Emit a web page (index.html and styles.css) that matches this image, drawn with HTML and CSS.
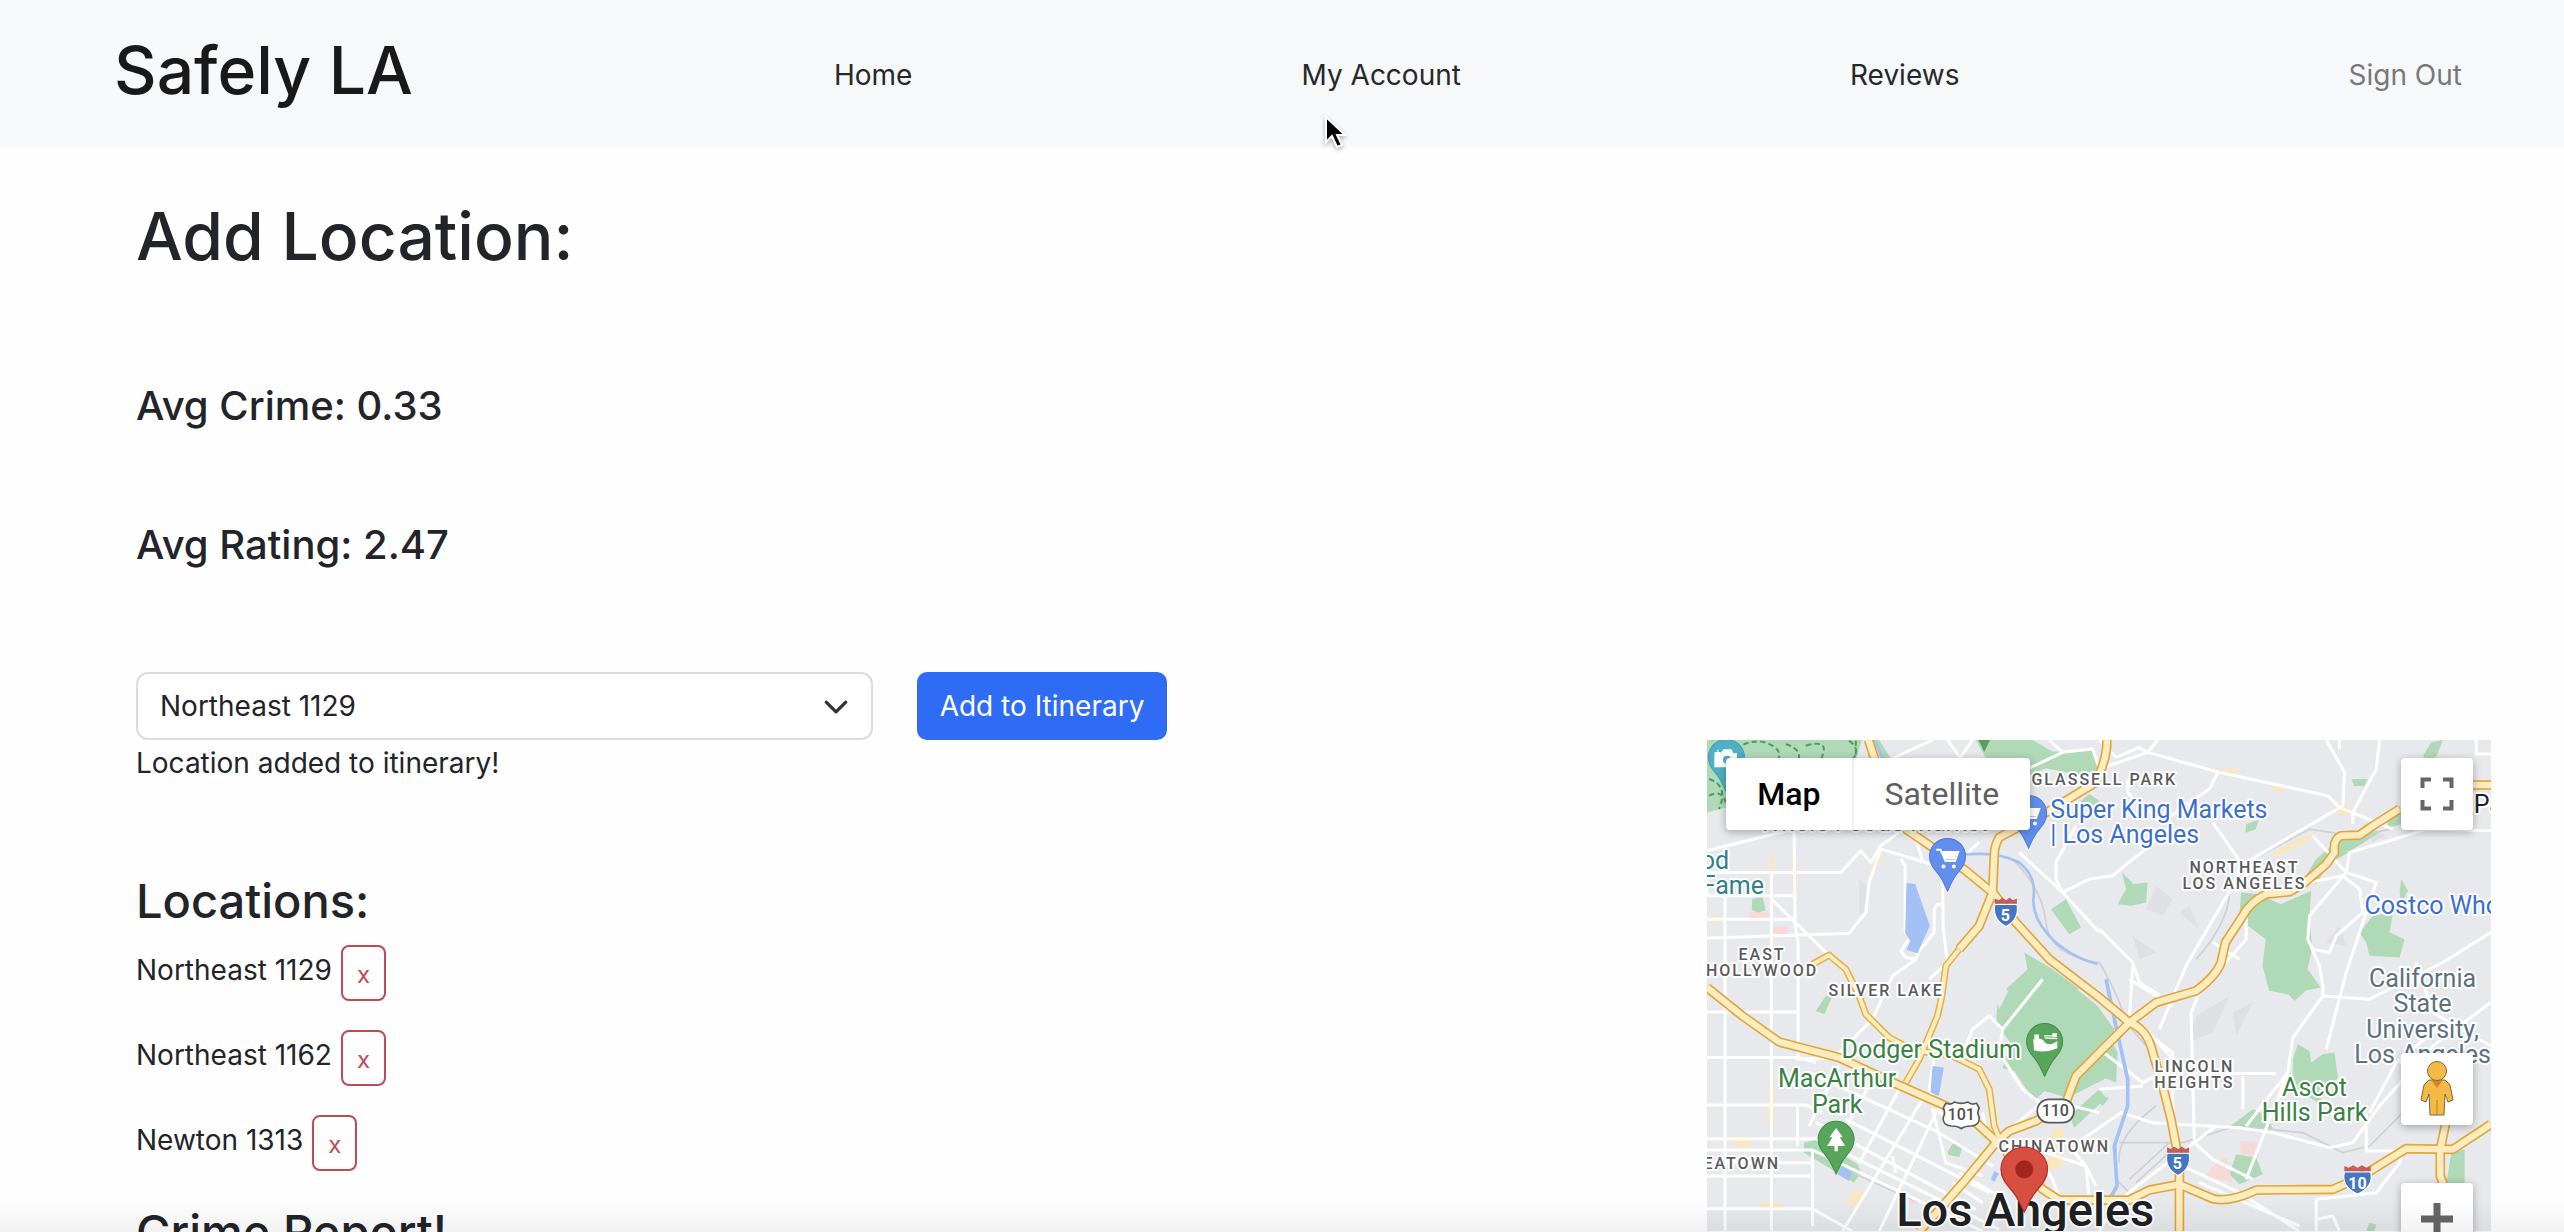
FILE: index.html
```html
<!DOCTYPE html>
<html lang="en">
<head>
<meta charset="utf-8">
<meta name="viewport" content="width=device-width, initial-scale=1">
<title>Safely LA</title>
<link rel="stylesheet" href="styles.css">
</head>
<body>
<header class="navbar">
  <a class="brand" href="#">Safely LA</a>
  <nav class="nav">
    <a href="#">Home</a>
    <a href="#">My Account</a>
    <a href="#">Reviews</a>
    <a class="muted" href="#">Sign Out</a>
  </nav>
</header>

<main class="page">
  <section class="planner">
    <h1>Add Location:</h1>
    <h3>Avg Crime: 0.33</h3>
    <h3>Avg Rating: 2.47</h3>
    <form class="add-form">
      <div class="select-wrap">
        <select class="select" aria-label="Location">
          <option>Northeast 1129</option>
          <option>Northeast 1162</option>
          <option>Newton 1313</option>
        </select>
        <svg class="chevron" viewBox="0 0 16 16" aria-hidden="true"><path d="m2 5 6 6 6-6"/></svg>
      </div>
      <button class="btn-primary" type="button">Add to Itinerary</button>
    </form>
    <p class="status">Location added to itinerary!</p>
    <h2>Locations:</h2>
    <ul class="locations">
      <li><span>Northeast 1129</span><button class="btn-remove" type="button">x</button></li>
      <li><span>Northeast 1162</span><button class="btn-remove" type="button">x</button></li>
      <li><span>Newton 1313</span><button class="btn-remove" type="button">x</button></li>
    </ul>
    <h2 class="report">Crime Report!</h2>
  </section>

  <section class="map" aria-label="Map of Los Angeles">
    <svg class="map-canvas" viewBox="0 0 783 491">
      <defs>
        <path id="pin" d="M0-54a54 54 0 0 1 54 54c0 28-20 42-34 64-9 15-14 28-20 40-6-12-11-25-20-40-14-22-34-36-34-64a54 54 0 0 1 54-54z"/>
        <g id="cart"><path d="M-34-20h13l15 34h28l10-27h-48" fill="none" stroke="#fff" stroke-width="6"/><path d="M-17-14h48l-10 23h-28z" fill="#fff"/><circle cx="-12" cy="30" r="6" fill="#fff"/><circle cx="19" cy="30" r="6" fill="#fff"/></g>
        <g id="shield"><path d="M-33-22h66c6 32-6 52-33 66-27-14-39-34-33-66z" fill="#4676c0" stroke="#fff" stroke-width="3"/><path d="M-33-24v-16l11 5 11-7 11 7 11-7 11 7 11-5v16z" fill="#c25d5b"/></g>
        <g id="highways">
          <path d="M24 775 130 860 240 938 420 985 560 1050 740 1130 830 1180 895 1240"/>
          <path d="M508 33 530 100 620 300 700 355 800 425 885 495 950 580 1050 690 1200 805 1290 880Q1345 900 1360 970L1390 1070 1415 1170 1440 1300V1506"/>
          <path d="M1222 33Q1226 80 1190 160L1050 245 900 325Q885 350 885 380L880 490 840 590 780 660"/>
          <path d="M2100 240 2020 290 1980 318 1925 320Q1900 330 1905 370L1880 405 1810 465 1770 488 1700 495Q1650 520 1630 560L1578 640 1565 700Q1550 740 1490 785L1370 820 1290 880 1200 970 1130 1040 1100 1120 1010 1175 930 1205 890 1240 800 1350 730 1430 660 1506"/>
          <path d="M895 1240 960 1310 1030 1380 1080 1412H1290L1350 1382 1440 1365 1540 1408Q1590 1420 1670 1382L1900 1380 1980 1345 2120 1258 2260 1260 2373 1185"/>
          <path d="M2245 1150 2222 1260 2222 1340 2245 1400"/>
          <path d="M2300 168H2380"/>
        </g>
        <g id="avenues">
          <path d="M340 705 390 678 440 720 480 800 500 855 570 925 640 962 760 980 840 1020 870 1080 885 1190 905 1240"/>
          <path d="M780 660 740 710 728 800 715 860 660 990 620 1060"/>
        </g>
      </defs>
      <g transform="translate(-8 -11) scale(.333333)">
        <rect x="24" y="33" width="2360" height="1500" fill="#e8e9ed"/>
        <g fill="#dfe0e4">
          <path d="M1370 470l50 40-30 50-50-20zM1470 530l30 70-60-50zM1300 620l70 50-50 20zM1490 860l100-60-50 110-70 30zM1600 850l60-30-50 100zM1880 640l40-50 20 60zM480 450l25 20-10 90-15-10zM1990 280l70 40-40 20z"/>
        </g>
        <g fill="#b0d9b8">
          <path d="M24 33H488L460 130 90 232 24 250zM540 33l50 80-30 10-40-90zM830 33h170l60 35 120-5 20 60-60 15-100-20-70 30-60-60-50 0zM1140 220l30-25 30 20-20 25zM1055 540l45-30 45 85-35 20zM160 508l30-5 10 40-25 8-17-10zM975 670l85 50 80 60-45 0-80 60-95-60 65-60z"/>
          <path d="M900 840 935 770l60-25 100 5 100 80 50 70-30 150-110 55-70-20-30 30-60-90-35-8 25-75-45-60 5-60zM1110 1160l90-80 20 25-95 90zM350 845l30-45 18 5-22 50zM745 1268l15-25 32 5-12 35-30-5zM315 1240l40-10 120 75 10 25-20 30-60-35-90-55z"/>
          <path d="M1255 525l25-45-12-50 35 35 42-5-5 60-45 10zM1625 490l50 5 70 30 90-40-6 90 10 80-15 65 40 55-100 20-55-10-20-75 10-80-80-60zM1640 285l38-12-10 28-30 10zM1890 400l-40 65-40-10 40-65 100-85 90 5-110 70zM1955 150h50l-10 20-30 2zM2170 80l25-40 35-7-20 50-30 10zM2060 250l40-20 15 55-50 10zM2020 560l60-10-10 60 45 20-15 55-90-5-10-40-20-30zM2105 450l20 35-20 40-5-40zM1735 760l75-20 25 30-50 45zM1780 990l15-45 35 20 5 35 35-25 35-5 10 75-60 75-75-50zM1600 1185l60-45 45 20 15 40-60 0-70-10zM1610 1275l60 10 20 50-70 30-30-30zM2255 1270l40-10v105h-55zM2010 1480l20 5-5 21h-25zM1200 850l25 60 30 60-5 90-50-20zM1200 1100l30 5-20 25-10-10z"/>
        </g>
        <path fill="none" stroke="#4a9c60" stroke-width="6" stroke-dasharray="16 10" d="M110 60q60-40 110-10t-20 80M260 45q60 20 30 60M320 50q70-20 50 30t60 20M30 150q60 20 30 90M450 35q40 30 5 60M470 35v50M30 200q40-20 50 20"/>
        <g fill="#fae7c0">
          <path d="M275 390h18v110h-14zM210 380h12v150h-12zM540 350l10 30-30 60-15 10zM24 560h45v20H24zM210 1055h15v130h-20zM105 1220h50v30h-50zM185 1420h60v20h-60zM1720 370l120-60 5 15-120 60zM1900 230l40-10 20 30-40 10zM1560 120h50v15h-50zM1710 170h50l-10 18-35-5zM470 1380l35 15-25 40-45-20zM880 1380l35 30-40 70zM1060 1200h35l-10 120h-40z"/>
        </g>
        <path fill="#f6d9d8" d="M150 550h65v25h-65zM222 592h45v22h-45zM1620 1235l65 5-10 45-50-10zM1540 1310l40-25 20 75-80-20zM625 1395l35 15-25 20z"/>
        <g fill="none" stroke="#cfd0d5" stroke-width="5">
          <path d="M940 390Q1030 480 1040 580T1200 700Q1260 800 1280 880L1340 950M1490 690Q1580 590 1590 500M1680 380 1830 300 1960 320 2080 300M1260 1240h190l160-50 200 20 120 60 80-20 100-100M1290 1350l120-110M1310 1360l110-100M1250 1240v110l60 60M1370 1130q-120 90-110 170M460 1330l200 90"/>
        </g>
        <g fill="none" stroke="#fff" stroke-width="9" stroke-linejoin="round">
          <path d="M24 365 285 300 470 260M24 430H425L485 365 515 400 545 350 600 310 700 280M217 430V750M78 500V1506M24 500H285M24 570H285M285 300 288 590 297 640V850M24 627 450 612 500 550 510 460 545 360 730 415 732 600 745 700 690 750"/>
          <path d="M217 510 330 620 400 690M650 330 670 395M605 390 618 410V610L632 625 605 665 620 685 650 690 660 665 705 610V540L715 525H730M575 90 700 33M745 33 800 110M820 33 780 90M985 120 1090 70 1050 33M1090 70 1180 60 1200 120M960 370 1090 490 1200 610M1130 290 1070 400V450L1090 490 1170 450 1240 440 1300 390 1340 360M840 340 800 375"/>
          <path d="M1200 33 1250 85 1320 55 1345 70 1375 33M1200 120 1345 70 1560 130 1885 200 1920 235 2080 300M1285 150V190L1320 230 1400 270 1530 180 1555 130M1540 280 1620 395 1610 490M1880 33 1935 130 1930 230 1640 400 1460 710 1380 900M2040 33 2030 120 1960 250V285M2330 33V75H2373M1840 320 1940 430 2030 460 1940 730 1880 960M1830 460 1930 440 1980 480 1990 550 1910 620 1890 670 1840 660 1825 630 1830 560 1940 430 1950 370 2070 335 2180 300 2373 305M1640 560V630L1500 790 1475 850 1485 1240 1540 1290 1660 1350M1540 640 1620 690M1825 630 1860 710 1870 770V800L1780 925 1765 1030 1640 1190M1200 600 1300 700 1320 760 1400 810M1300 710 1290 870 1420 970V1200M1290 750 1420 830M1330 890 1430 1000"/>
          <path d="M1870 800 2010 810 2230 700 2373 610M2150 700 2200 850 2373 950M2373 820 2200 950 2040 1130 1960 1240 1890 1255 1720 1210 1620 1195 1360 1180 1265 1150 1150 1230M1480 1033H1730M1630 1040V1140M1765 1030 1640 1350M1550 1190 1300 1380 1220 1450M1200 960 1330 1060 1440 1000M1200 1080 1330 1070M2000 1150V1265H2110L2100 1300 2030 1390 1850 1410V1506M1450 1310 1620 1390 1800 1506M1500 1360 1800 1490M1850 1470 1900 1460 1920 1506M2010 1150 2090 1000 2210 900M1920 33V60"/>
          <path d="M24 848H297M24 985H300L350 1000M217 750V1000M297 850V990M24 1127H320L370 1150M295 1127V1250M217 1000V1506M24 1228H350L900 1500M24 1262H340L850 1506M24 1300H340M24 1340H340M24 1438H340L460 1506M340 1260V1490M290 990 420 985 500 1020 560 1060M420 970 520 870 580 740 650 690M720 800 720 880M720 1150 700 1140 740 1300 850 1340M705 980 690 1080 730 1160M780 1000 820 900 870 860 910 900 1030 750M910 900 900 970 970 1080 1060 1150"/>
          <path d="M420 1010 330 1190M520 1050 400 1270M600 1080 480 1300M670 1110 430 1506M710 1150 540 1506M440 1170 870 1390M350 1180 830 1440M330 1030 720 1210 880 1310M580 1280 590 1330M850 1150 860 1200 920 1230 1160 1310 1190 1370M930 1200 1040 1110 1200 1150M1100 1240 1160 1310 1170 1410M1000 1250 1060 1350 1080 1410M1240 1430 1200 1506M1100 1410 1060 1506M760 1360 850 1420M780 1330 900 1400"/>
        </g>
        <g fill="none" stroke="#a3c1f4" stroke-width="9">
          <path d="M528 33 550 90M670 325Q740 380 820 375T960 400Q1010 440 1003 500T1050 620T1195 705" stroke-width="8"/>
          <path d="M1220 750 1245 870 1285 1050V1130L1245 1250 1253 1370 1230 1410" stroke-width="11"/>
        </g>
        <path fill="#a3c1f4" d="M622 462l26 3 44 125-37 82-33-10 12-25-16-25zM700 1010l34 5-15 85-25-10zM430 1310l28 20-8 25-35-20zM875 1350l10-25 14 8-14 25z"/>
        <g fill="none" stroke-linejoin="round">
          <use href="#avenues" stroke="#e6b040" stroke-width="21"/>
          <use href="#highways" stroke="#e0a83c" stroke-width="29"/>
          <use href="#avenues" stroke="#fdecc0" stroke-width="12"/>
          <use href="#highways" stroke="#fdecc0" stroke-width="19"/>
        </g>
        <use href="#pin" x="82" y="85" fill="#4fb0c6" stroke="#3b9cb2" stroke-width="3"/>
        <path d="M48 75h18l8-12h22l6 12h10v38H48zM56 62v18M47 71h18" fill="#fff" stroke="#fff" stroke-width="4"/><circle cx="84" cy="92" r="12" fill="#4fb0c6"/>
        <use href="#pin" x="855" y="-35" fill="#57a05c"/>
        <use href="#pin" x="988" y="253" fill="#628fee" stroke="#4b78db" stroke-width="3"/><use href="#cart" x="988" y="253"/>
        <use href="#pin" x="745" y="382" fill="#628fee" stroke="#4b78db" stroke-width="3"/><use href="#cart" x="745" y="382"/>
        <use href="#pin" x="1036" y="937" fill="#57a65c" stroke="#3f8a4a" stroke-width="3"/>
        <path d="M1002 930q22-8 34 8t38-3v22q-36 16-70 6zM1005 916h14v12h-14zM1059 912h14v12h-14z" fill="#fff"/><path d="M1036 926l38 2M1034 920l24 0" stroke="#fff" stroke-width="4"/>
        <use href="#pin" x="411" y="1230" fill="#57a65c" stroke="#3f8a4a" stroke-width="3"/>
        <path d="M411 1196l20 28h-9l16 26h-22v16h-10v-16h-22l16-26h-9z" fill="#fff"/>
        <use href="#shield" x="920" y="548"/><use href="#shield" x="1436" y="1294"/>
        <use href="#shield" transform="translate(1974 1350) scale(1.2 1)"/>
        <path d="M740 1122q16 6 26-4 20 8 40 0 10 10 26 4l8 14q-8 14 0 28 2 24-24 26-20 0-30 8-10-8-30-8-26-2-24-26 8-14 0-28z" fill="#fff" stroke="#58595c" stroke-width="5"/>
        <rect x="1014" y="1110" width="110" height="70" rx="34" fill="#fff" stroke="#58595c" stroke-width="5"/>
      </g>
      <g class="shield-text">
        <text x="298" y="181">5</text><text x="470" y="429">5</text><text x="650" y="449">10</text>
        <text class="dark" x="254" y="380">101</text><text class="dark" x="348" y="376">110</text>
      </g>
      <g class="area">
        <text x="397" y="45" text-anchor="middle">GLASSELL PARK</text>
        <text x="537" y="133" text-anchor="middle">NORTHEAST</text>
        <text x="537" y="149" text-anchor="middle">LOS ANGELES</text>
        <text x="55" y="220" text-anchor="middle">EAST</text>
        <text x="55" y="236" text-anchor="middle">HOLLYWOOD</text>
        <text x="179" y="256" text-anchor="middle">SILVER LAKE</text>
        <text x="487" y="332" text-anchor="middle">LINCOLN</text>
        <text x="487" y="348" text-anchor="middle">HEIGHTS</text>
        <text x="347" y="412" text-anchor="middle">CHINATOWN</text>
        <text x="73" y="429" text-anchor="end">EATOWN</text>
      </g>
      <g class="place blue">
        <text x="343" y="78">Super King Markets</text>
        <text x="343" y="103">| Los Angeles</text>
        <text x="657" y="174">Costco Wholesale</text>
        <text class="slate" x="52" y="91">Whole Foods Market</text>
      </g>
      <g class="place teal"><text x="22" y="129" text-anchor="end">od</text><text x="57" y="154" text-anchor="end">Fame</text></g>
      <g class="place green">
        <text x="224" y="318" text-anchor="middle">Dodger Stadium</text>
        <text x="130" y="347" text-anchor="middle">MacArthur</text>
        <text x="130" y="373" text-anchor="middle">Park</text>
        <text x="607" y="356" text-anchor="middle">Ascot</text>
        <text x="607" y="381" text-anchor="middle">Hills Park</text>
      </g>
      <g class="place slate">
        <text x="715" y="247" text-anchor="middle">California</text>
        <text x="715" y="272" text-anchor="middle">State</text>
        <text x="715" y="298" text-anchor="middle">University,</text>
        <text x="715" y="323" text-anchor="middle">Los Angeles</text>
      </g>
      <text class="place city-small" x="766" y="73">Pasadena</text>
      <text class="city" x="318" y="486" text-anchor="middle">Los Angeles</text>
      <g transform="translate(317 429)"><use href="#pin" transform="scale(.43 .41)" fill="#d84f42" stroke="#b23329" stroke-width="3"/><circle r="9" fill="#a1261d"/></g>
    </svg>
    <div class="map-type">
      <button class="active" type="button">Map</button>
      <button type="button">Satellite</button>
    </div>
    <button class="map-control fullscreen" type="button" aria-label="Toggle fullscreen view">
      <svg width="34" height="34" viewBox="0 0 34 34"><path d="M2.500 11V2.500H11M23 2.500h8.500V11M31.500 23v8.500H23M11 31.500H2.500V23" fill="none" stroke="#666" stroke-width="4"/></svg>
    </button>
    <div class="map-side">
      <button class="map-control" type="button" aria-label="Street View">
        <svg width="34" height="56" viewBox="0 0 34 56"><g fill="#f3bb45" stroke="#77664a" stroke-width="1"><path d="M9 19h16l5 5 3 15-5 2-3-8-1 21H10L9 33l-3 8-5-2 3-15z"/><circle cx="17" cy="10" r="9.500"/></g><path d="M12 20h10l-5 7z" fill="#d98228"/><path d="M17 39v15" stroke="#a98031"/></svg>
      </button>
      <button class="map-control" type="button" aria-label="Zoom in">
        <svg width="34" height="34" viewBox="0 0 34 34"><path d="M17 1v32M1 17h32" stroke="#666" stroke-width="7"/></svg>
      </button>
    </div>
  </section>
</main>
<div class="fade"></div>
<svg class="cursor" viewBox="0 0 24 36" aria-hidden="true"><path d="M3 2v25l6-6 5 11 5-2-5-10h8z" fill="#000" stroke="#fff" stroke-width="2"/></svg>
</body>
</html>
```
FILE: styles.css
```css
* { box-sizing: border-box; }

body {
  margin: 0;
  height: 100vh;
  overflow: hidden;
  background: #fefefe;
  color: #222429;
  font-family: Inter, "Liberation Sans", sans-serif;
  font-size: 28px;
  line-height: 40px;
}

h1, h2, h3, p, ul { margin: 0; padding: 0; font-weight: 500; }
p, ul { font-weight: 400; }
button, select { font: inherit; color: inherit; }

.navbar {
  display: flex;
  align-items: center;
  gap: 32px;
  height: 148px;
  padding: 0 102px 0 114px;
  background: #f7f8fa;
}
.navbar a { color: #26282b; text-decoration: none; white-space: nowrap; }
.navbar .brand { padding-bottom: 8px; font-size: 66px; line-height: 88px; font-weight: 500; color: #191919; }
.nav { display: flex; flex: 1; justify-content: space-between; padding-top: 2px; }
.nav::before { content: ""; }
.navbar .muted { color: #77797c; }

.page {
  display: grid;
  grid-template-columns: 2fr 1fr;
  column-gap: 4px;
  padding: 44px 73px 0 136px;
}

h1 { margin-bottom: 100px; font-size: 66px; line-height: 88px; }
h3 { margin-bottom: 88px; font-size: 40px; line-height: 51px; }
h2 { font-size: 47px; line-height: 60px; }

.add-form { display: flex; gap: 44px; margin-top: 102px; }
.select-wrap { position: relative; width: 47%; }
.select {
  display: block;
  width: 100%;
  height: 68px;
  padding: 0 22px;
  appearance: none;
  border: 2px solid #d9dce0;
  border-radius: 12px;
  background: #fff;
}
.chevron { position: absolute; right: 24px; top: 22px; width: 26px; height: 26px; fill: none; stroke: #303236; stroke-width: 2; stroke-linecap: round; stroke-linejoin: round; }
.btn-primary { height: 68px; padding: 0 23px; border: 0; border-radius: 10px; background: #2f6cf6; color: #fff; white-space: nowrap; }
.status { margin: 3px 0 88px; }

.locations { list-style: none; margin-top: 14px; }
.locations li { display: flex; align-items: flex-start; gap: 9px; height: 85px; }
.locations span { padding-top: 5px; }
.report { margin-top: 2px; }
.btn-remove { width: 45px; height: 56px; padding: 4px 0 0; border: 2px solid #bd4a55; border-radius: 8px; background: transparent; color: #bd4a55; font-size: 24px; line-height: 32px; }

.map { position: relative; align-self: start; margin-top: 548px; font-family: Roboto, sans-serif; }
.map-canvas { display: block; width: 100%; }
.map-type { position: absolute; left: 19px; top: 18px; display: flex; height: 72px; border-radius: 4px; background: #fff; box-shadow: 0 2px 8px rgba(0, 0, 0, .3); }
.map-type button { padding: 0 31px; border: 0; background: none; color: #5f5f5f; font-size: 32px; }
.map-type .active { border-right: 2px solid #eee; color: #000; font-weight: 500; }
.map-control { display: flex; align-items: center; justify-content: center; width: 72px; height: 72px; padding: 0; border: 0; border-radius: 4px; background: #fff; box-shadow: 0 2px 8px rgba(0, 0, 0, .3); }
.fullscreen { position: absolute; right: 18px; top: 18px; }
.map-side { position: absolute; right: 18px; top: 313px; display: grid; gap: 58px; }

.map-canvas text { paint-order: stroke; stroke: #fff; stroke-width: 4px; stroke-linejoin: round; }
.area { font-size: 16px; font-weight: 500; letter-spacing: 2px; fill: #5a5b5e; }
.place { font-size: 25px; }
.blue { fill: #3b6fd0; }
.teal { fill: #31808a; }
.green { fill: #3a8144; }
.slate { fill: #5b7181; }
.city-small { fill: #222; }
.city { font-size: 47px; font-weight: 500; fill: #202124; }
.map-canvas .shield-text text { stroke: none; fill: #fff; font-size: 16px; font-weight: 700; text-anchor: middle; }
.map-canvas .shield-text .dark { fill: #4c4d50; font-weight: 500; }

.fade { position: fixed; inset: auto 0 0; height: 32px; background: linear-gradient(transparent, rgba(0, 0, 0, .05)); pointer-events: none; }
.cursor { position: absolute; left: 1323px; top: 115px; width: 24px; height: 36px; filter: drop-shadow(0 2px 2px rgba(0, 0, 0, .3)); }
```
